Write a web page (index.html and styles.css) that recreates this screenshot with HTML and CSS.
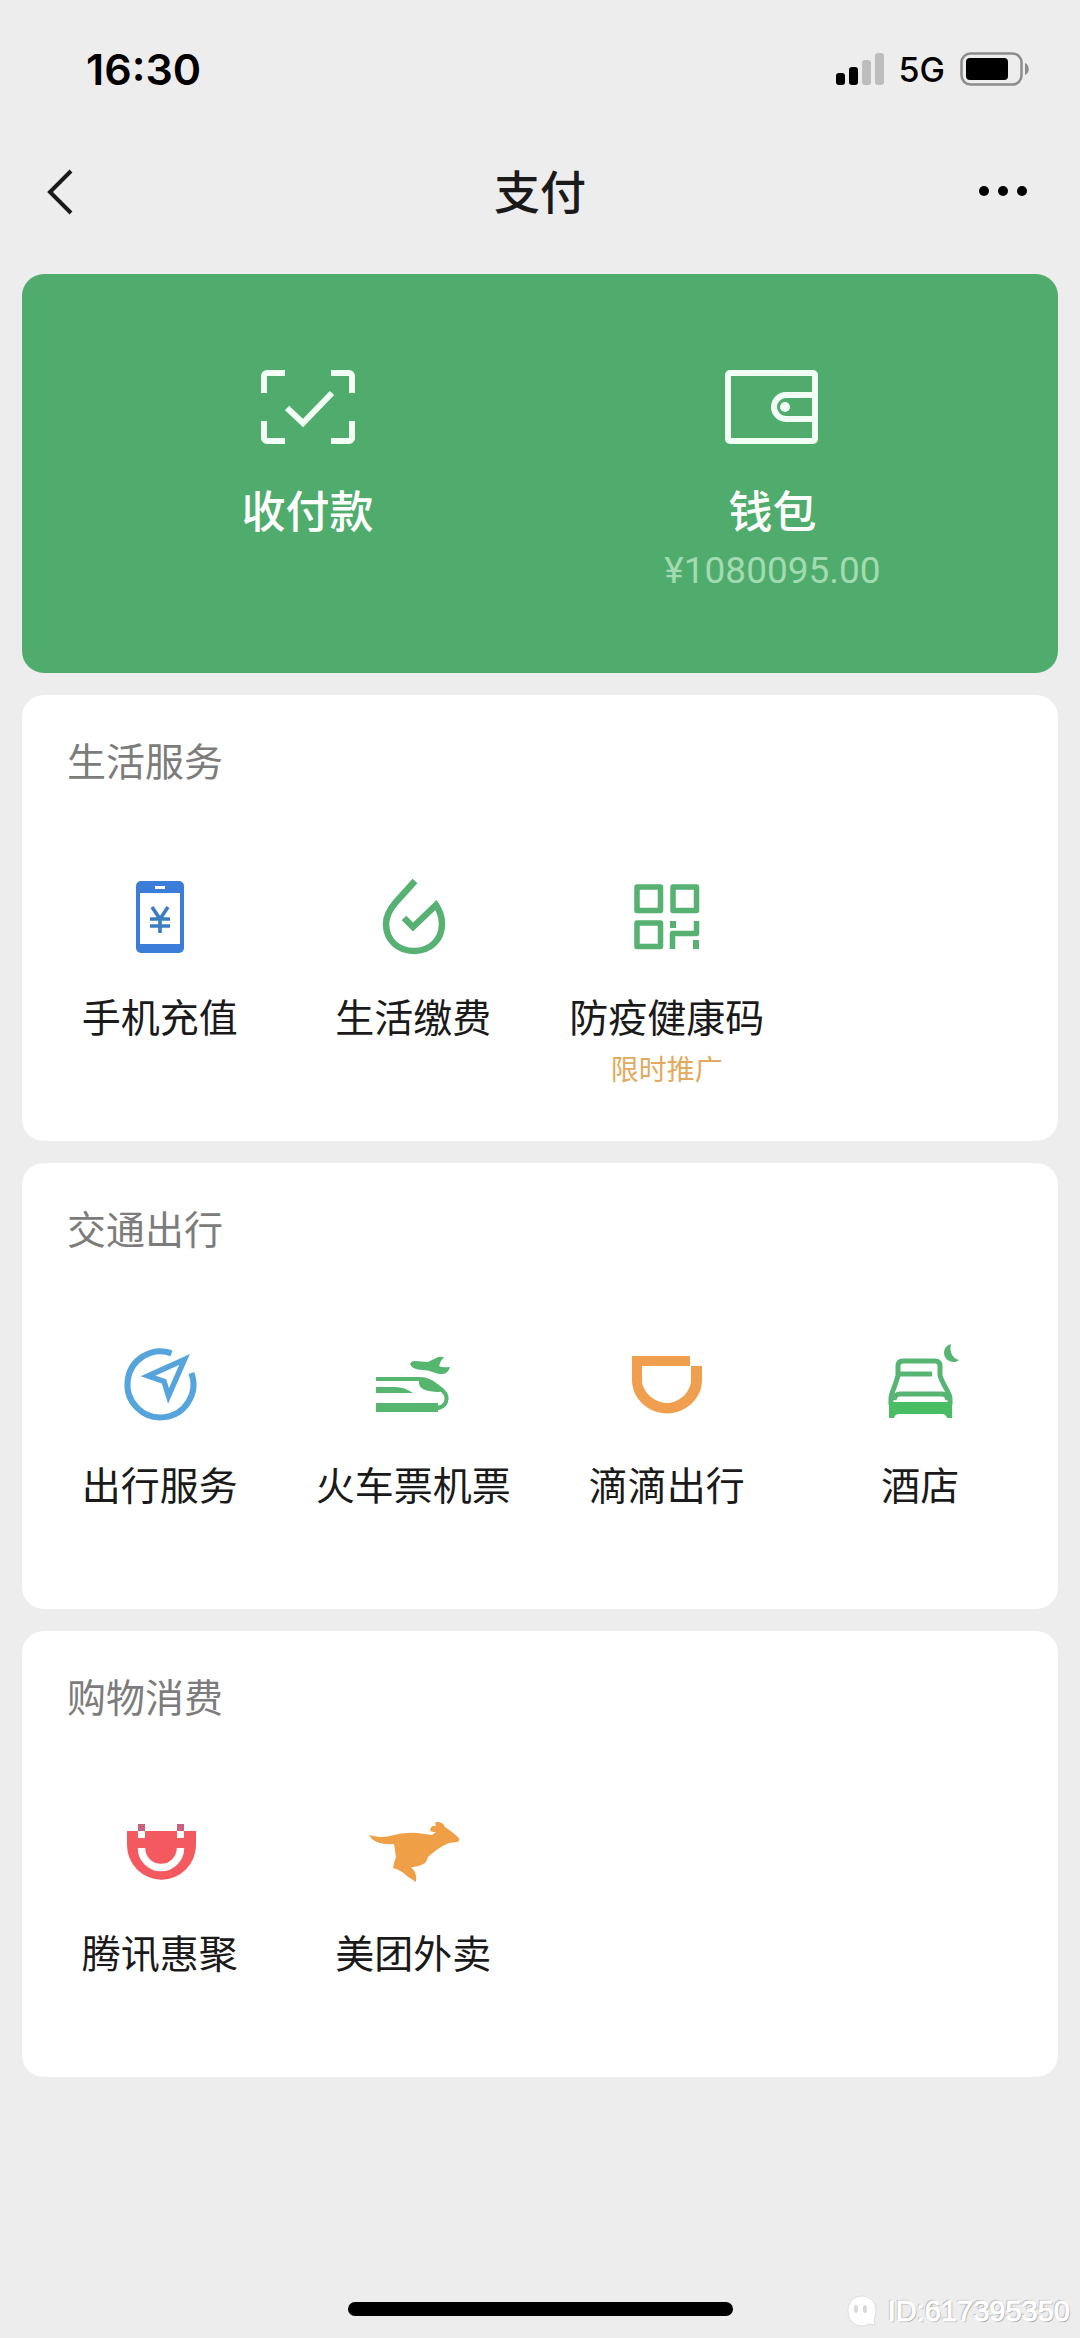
FILE: index.html
```html
<!DOCTYPE html>
<html lang="zh-CN">
<head>
<meta charset="utf-8">
<meta name="viewport" content="width=device-width, initial-scale=1">
<title>支付</title>
<link rel="stylesheet" href="styles.css">
</head>
<body>
<div class="page">
  <div class="status">
    <span class="time">16:30</span>
    <div class="status-right">
      <svg class="signal" viewBox="0 0 48 34" aria-hidden="true">
        <rect x="0" y="21" width="9" height="12" rx="3"/>
        <rect x="13" y="15" width="9" height="18" rx="3"/>
        <rect x="26" y="8" width="9" height="25" rx="3" fill="#bdbdbd"/>
        <rect x="39" y="1" width="9" height="32" rx="3" fill="#bdbdbd"/>
      </svg>
      <span class="network">5G</span>
      <svg class="battery" viewBox="0 0 70 34" aria-hidden="true">
        <rect x="1.5" y="1.5" width="60" height="31" rx="9" fill="none" stroke="#8c8c8c" stroke-width="2.5"/>
        <rect x="6" y="6" width="42" height="22" rx="4"/>
        <path d="M65 11c5 2 5 10 0 12z" fill="#8c8c8c"/>
      </svg>
    </div>
  </div>

  <header class="nav">
    <button class="nav-button" type="button" aria-label="返回">
      <svg class="back" viewBox="0 0 28 48"><path d="M23 3 2 24l21 21" fill="none" stroke="#1a1a1a" stroke-width="4"/></svg>
    </button>
    <h1 class="title">支付</h1>
    <button class="nav-button nav-more" type="button" aria-label="更多">
      <svg class="more" viewBox="0 0 52 12"><circle cx="4" cy="5" r="5"/><circle cx="23" cy="5" r="5"/><circle cx="42" cy="5" r="5"/></svg>
    </button>
  </header>

  <main class="cards">
    <section class="hero">
      <button class="hero-item" type="button">
        <svg class="hero-icon" viewBox="0 0 96 80" aria-hidden="true">
          <path d="M4 26V9a3 3 0 0 1 3-3h18M71 6h18a3 3 0 0 1 3 3v17M92 54v17a3 3 0 0 1-3 3H71M25 74H7a3 3 0 0 1-3-3V54M27 41l16 15 29-30"/>
        </svg>
        <span class="hero-label">收付款</span>
      </button>
      <button class="hero-item" type="button">
        <svg class="hero-icon" viewBox="0 0 96 80" aria-hidden="true">
          <rect x="3" y="6" width="87" height="68" rx="2"/>
          <path d="M90 28H61a12 12 0 0 0 0 24h29"/>
          <circle class="clasp" cx="60" cy="40" r="5"/>
        </svg>
        <span class="hero-label">钱包</span>
        <span class="balance">¥1080095.00</span>
      </button>
    </section>

    <section class="card">
      <h2 class="card-title">生活服务</h2>
      <div class="services">
        <button class="service" type="button">
          <svg class="icon" viewBox="0 0 84 84" aria-hidden="true">
            <path fill="#3b7dd8" fill-rule="evenodd" d="M23 6h38a5 5 0 0 1 5 5v62a5 5 0 0 1-5 5H23a5 5 0 0 1-5-5V11a5 5 0 0 1 5-5ZM22 18v51h40V18ZM37 11v3h10v-3Z"/>
            <path fill="none" stroke="#3b7dbf" stroke-width="3.6" d="m34 32 8 12 8-12M32 44h20M32 51h20M42 43v15"/>
          </svg>
          <span class="label">手机充值</span>
        </button>
        <button class="service" type="button">
          <svg class="icon" viewBox="0 0 84 84" aria-hidden="true">
            <path fill="none" stroke="#56b173" stroke-width="6.500" d="M44 6 25 27C18 35 15 42 15 49c0 16 12 27 28 27s28-11 28-27c0-7-2-13-6-19L42 52l-9-9"/>
          </svg>
          <span class="label">生活缴费</span>
        </button>
        <button class="service" type="button">
          <svg class="icon" viewBox="0 0 84 84" aria-hidden="true">
            <g fill="none" stroke="#56b173" stroke-width="5.500" stroke-linejoin="round">
              <rect x="12" y="12" width="23.500" height="23.500"/>
              <rect x="48" y="12" width="23.500" height="23.500"/>
              <rect x="12" y="48" width="23.500" height="23.500"/>
              <path d="M47.500 74V58.500h24V46"/>
            </g>
            <path fill="#56b173" d="M45 46h6v7h-6zM68 65h6v9h-6z"/>
          </svg>
          <span class="label">防疫健康码</span>
          <span class="promo">限时推广</span>
        </button>
      </div>
    </section>

    <section class="card">
      <h2 class="card-title">交通出行</h2>
      <div class="services">
        <button class="service" type="button">
          <svg class="icon" viewBox="0 0 84 84" aria-hidden="true">
            <g fill="none" stroke="#55a5dc">
              <path stroke-width="6" d="M53.500 10.300A33 33 0 1 0 73.400 30"/>
              <path stroke-width="5.500" d="M66.500 16.500 30 33l16 5.500L50.500 53Z"/>
            </g>
          </svg>
          <span class="label">出行服务</span>
        </button>
        <button class="service" type="button">
          <svg class="icon" viewBox="0 0 84 84" aria-hidden="true">
            <g fill="#56b56e">
              <path d="M5 44h19q10 0 18 6H5zM5 60h62v9H5z"/>
              <path d="M48 36q8-1 14 3l11 9q-5 1.500-12 .5Q49 47 48 41z"/>
              <path d="M39 21q1-3 5-3l13 1 8-4q3-2 8-1-4 4-5 9 3 2 11 1-1 4-5 6.500-4 1-8 0l-9-3-10-1q-6-1-8-5.500z"/>
            </g>
            <path fill="none" stroke="#56b56e" stroke-width="4" d="M5 36h43c11 0 17 6 24 12 7 7 3 17-7 17"/>
          </svg>
          <span class="label">火车票机票</span>
        </button>
        <button class="service" type="button">
          <svg class="icon" viewBox="0 0 84 84" aria-hidden="true">
            <path fill="#ef9f4d" d="M7 13h58v10H17v14c0 13 14 23 25 23s24-10 24-23V23h11v14c0 19-17 33.500-35 33.500S7 56 7 37Z"/>
          </svg>
          <span class="label">滴滴出行</span>
        </button>
        <button class="service" type="button">
          <svg class="icon" viewBox="0 0 84 84" aria-hidden="true">
            <g fill="none" stroke="#56b573" stroke-width="5">
              <path d="M13 62v-7c0-5 6-16 7-23v-9q0-5 5-5h32q5 0 5 5v9c1 7 10 18 10 23v7"/>
              <path d="M21 31h33M16 57q1-6 6-6h42q5 0 6 6"/>
            </g>
            <path fill="#48bd63" d="M11 59h63v16h-5q-1-4-5-4H21q-4 0-5 4h-5z"/>
            <path fill="#56b573" d="M73 1q-7 2-7 9c0 7 9 12 15 7-6-1-10-8-8-16z"/>
          </svg>
          <span class="label">酒店</span>
        </button>
      </div>
    </section>

    <section class="card">
      <h2 class="card-title">购物消费</h2>
      <div class="services">
        <button class="service" type="button">
          <svg class="icon" viewBox="0 0 84 84" aria-hidden="true">
            <path fill="#f4595f" d="M9 20h69v14a34.500 34.700 0 0 1-69 0Z"/>
            <path fill="#c9607c" d="M20 13h7v7h-7zM59 13h7v7h-7z"/>
            <path fill="#fff" d="M20 20h7v7h-7zM59 20h7v7h-7z"/>
            <path fill="none" stroke="#fff" stroke-width="7.500" d="M23.500 37a19.500 19.500 0 0 0 39 0"/>
          </svg>
          <span class="label">腾讯惠聚</span>
        </button>
        <button class="service" type="button">
          <svg class="icon" viewBox="0 0 84 84" aria-hidden="true">
            <path fill="#ef9f45" d="M-2 24c8 2 14 3 21 1q14-4 27-3l15 2 4-3q-6 0-6-2 1-5 6-4-2-4 1-4 6 0 8 5l7 5 7 6q1 3-2 4l-8 1c-5 2-8 4-11 6q-7 5-10 8l-2 5q-4 4-13 5h-2l4 5q2 5 1 10l-9-6q-6-6-14-8 1-6 3-11l-2-13c-9 1-21-1-25-9z"/>
          </svg>
          <span class="label">美团外卖</span>
        </button>
      </div>
    </section>
  </main>

  <footer class="footer">
    <div class="home-bar"></div>
    <div class="watermark">
      <svg class="ghost" viewBox="0 0 32 34" aria-hidden="true">
        <path d="M16 2C8 2 2 8 2 17s6 15 14 15q4 0 7-2l6 1-1-6q2-4 2-8C30 8 24 2 16 2Z" fill="#fff" stroke="#dedede"/>
        <ellipse cx="10" cy="15" rx="2" ry="4" fill="#d8d8d8"/><ellipse cx="19" cy="15" rx="2" ry="4" fill="#d8d8d8"/>
      </svg>
      <span>ID:617395350</span>
    </div>
  </footer>
</div>
</body>
</html>
```
FILE: styles.css
```css
* {
  box-sizing: border-box;
}

body {
  margin: 0;
  background: #eeedee;
  color: #1a1a1a;
  font-family: "Noto Sans CJK SC", sans-serif;
}

h1,
h2 {
  margin: 0;
  font-weight: 400;
}

button {
  margin: 0;
  padding: 0;
  border: 0;
  background: none;
  color: inherit;
  font: inherit;
}

svg {
  display: block;
  overflow: visible;
}

.page {
  display: flex;
  flex-direction: column;
  min-height: 100vh;
}

/* status bar */
.status {
  display: flex;
  align-items: center;
  justify-content: space-between;
  height: 138px;
  padding: 0 50px 0 86px;
  color: #000;
  font-family: Inter, sans-serif;
}

.time {
  font-size: 43px;
  font-weight: 600;
}

.status-right {
  display: flex;
  align-items: center;
  gap: 15px;
}

.signal {
  width: 48px;
  height: 34px;
}

.network {
  font-size: 34px;
  font-weight: 500;
}

.battery {
  width: 70px;
  height: 34px;
}

/* navigation */
.nav {
  display: grid;
  grid-template-columns: 1fr auto 1fr;
  align-items: center;
  height: 108px;
  padding: 0 48px;
}

.nav-button {
  justify-self: start;
}

.nav-more {
  justify-self: end;
}

.back {
  width: 28px;
  height: 48px;
}

.more {
  width: 52px;
  height: 12px;
}

.title {
  padding-bottom: 6px;
  font-size: 46px;
  font-weight: 500;
  line-height: 64px;
}

/* cards */
.cards {
  display: flex;
  flex-direction: column;
  gap: 22px;
  padding: 28px 22px;
}

.hero {
  display: grid;
  grid-template-columns: 1fr 1fr;
  align-items: start;
  min-height: 399px;
  padding: 93px 53px 40px;
  border-radius: 22px;
  background: #50ac6c;
  color: #fff;
}

.hero-item,
.service {
  display: flex;
  flex-direction: column;
  align-items: center;
}

.hero-icon {
  width: 96px;
  height: 80px;
  fill: none;
  stroke: #f2fff5;
  stroke-width: 6;
}

.clasp {
  fill: #f2fff5;
  stroke: none;
}

.hero-label {
  margin-top: 30px;
  font-size: 44px;
  font-weight: 500;
  line-height: 64px;
}

.balance {
  margin-top: 10px;
  color: #a2dbb1;
  font-family: Roboto, sans-serif;
  font-size: 37px;
  line-height: 40px;
}

.card {
  min-height: 446px;
  padding: 36px 11px;
  border-radius: 22px;
  background: #fff;
}

.card-title {
  padding-left: 34px;
  color: #7c7c7c;
  font-size: 39px;
  line-height: 56px;
}

.services {
  display: grid;
  grid-template-columns: repeat(4, 1fr);
  align-items: start;
  margin-top: 88px;
}

.icon {
  width: 84px;
  height: 84px;
}

.label {
  margin-top: 28px;
  font-size: 39px;
  line-height: 56px;
}

.promo {
  margin-top: 5px;
  color: #e3a95c;
  font-size: 28px;
  line-height: 40px;
}

/* bottom strip */
.footer {
  display: grid;
  grid-template-columns: 1fr auto 1fr;
  align-items: center;
  height: 58px;
  margin-top: auto;
  padding: 0 10px;
}

.home-bar {
  grid-column: 2;
  width: 385px;
  height: 14px;
  border-radius: 7px;
  background: #000;
}

.watermark {
  display: flex;
  align-items: center;
  justify-content: flex-end;
  gap: 10px;
  padding-top: 4px;
  color: #fff;
  font-family: "Liberation Sans", sans-serif;
  font-size: 29px;
  line-height: 36px;
  -webkit-text-stroke: 1px #fff;
  text-shadow: 1px 1px 1px #999, -1px -1px 1px #aaa;
}

.ghost {
  width: 32px;
  height: 34px;
}
```
